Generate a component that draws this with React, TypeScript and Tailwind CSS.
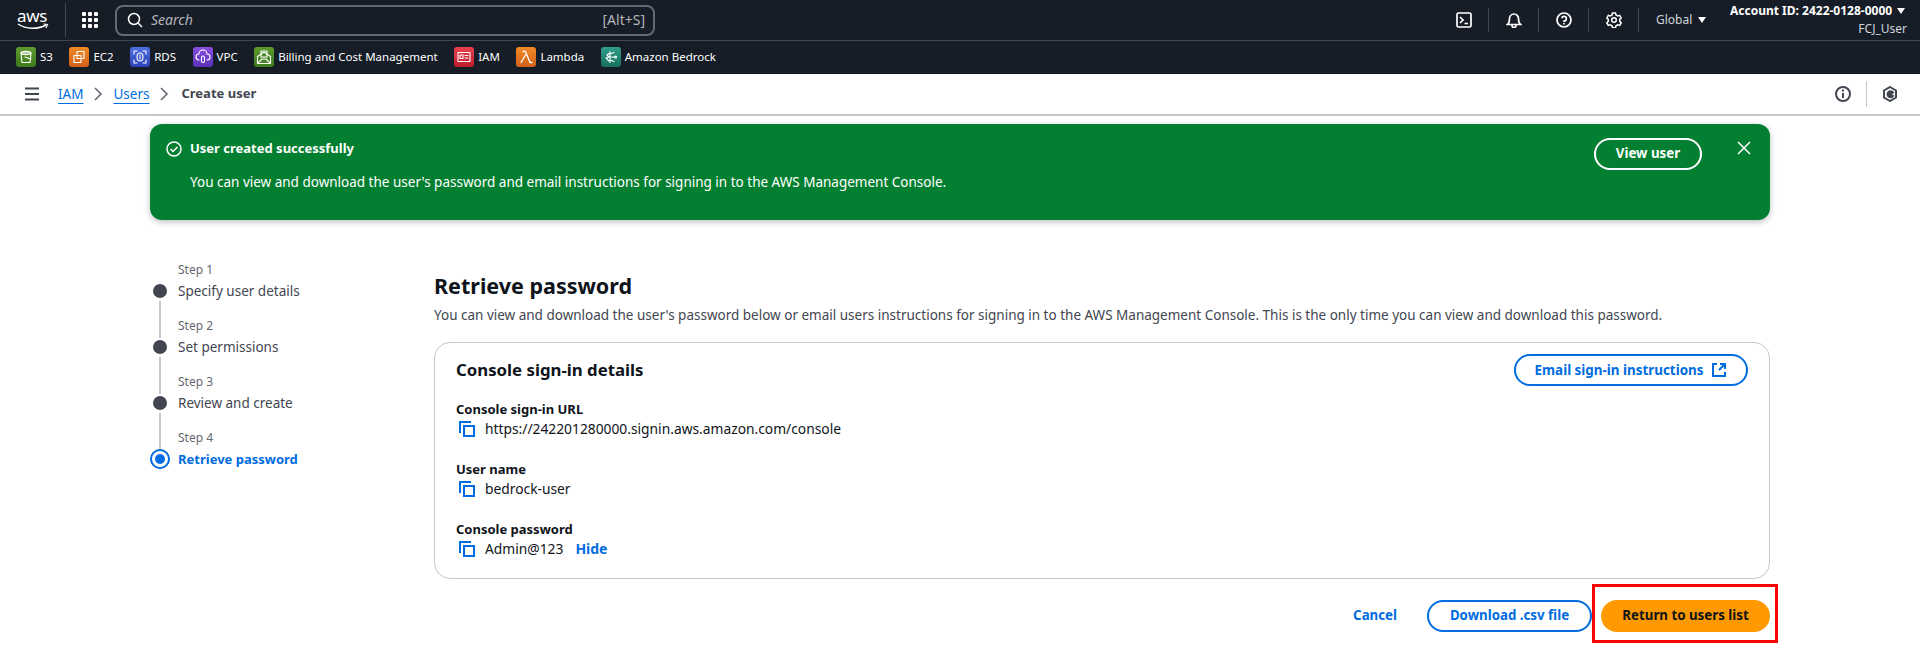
import React from "react";

const font = { fontFamily: '"Noto Sans", sans-serif' };

function ServiceIcon({ from, to, children }: { from: string; to: string; children: React.ReactNode }) {
  return (
    <span className={`w-5 h-5 rounded-[3px] flex items-center justify-center bg-gradient-to-b ${from} ${to}`}>
      <svg viewBox="0 0 20 20" className="w-5 h-5" fill="none" stroke="white" strokeWidth="1.1" strokeLinejoin="round" strokeLinecap="round">
        {children}
      </svg>
    </span>
  );
}

const services = [
  { name: "S3", from: "from-[#5d9a2e]", to: "to-[#3c7a1c]", w: "ml-4", icon: <><path d="M5 6h10l-1 9.5h-8z" /><ellipse cx="10" cy="6" rx="5" ry="1.6" /><path d="M9 10l6 2" /></> },
  { name: "EC2", from: "from-[#f08a24]", to: "to-[#d2601a]", w: "", icon: <><rect x="8" y="4.5" width="7" height="7" /><rect x="5" y="8.5" width="7" height="7" /></> },
  { name: "RDS", from: "from-[#4f6fe0]", to: "to-[#2e3fb8]", w: "", icon: <><ellipse cx="10" cy="10" rx="3" ry="4" /><path d="M4 7V4h3M16 7V4h-3M4 13v3h3M16 13v3h-3M10 8v4" /></> },
  { name: "VPC", from: "from-[#8a4fe0]", to: "to-[#5a30b8]", w: "", icon: <><path d="M6 13a3 3 0 0 1 0-6 4 4 0 0 1 8 0 3 3 0 0 1 0 6" /><rect x="8.5" y="9" width="3" height="6.5" rx="1.5" /></> },
  { name: "Billing and Cost Management", from: "from-[#5d9a2e]", to: "to-[#3c7a1c]", w: "", icon: <><path d="M3.5 9.5v7h13v-7L10 5z" /><path d="M3.5 16.5L8 12h4l4.500 4.500" /><path d="M7 4h6v6H7z" /></> },
  { name: "IAM", from: "from-[#e8404f]", to: "to-[#bd1c2c]", w: "", icon: <><rect x="4" y="5.500" width="12" height="9" /><rect x="6" y="8" width="3" height="3.500" /><path d="M11 8.500h3M11 11h3" /></> },
  { name: "Lambda", from: "from-[#f08a24]", to: "to-[#d2601a]", w: "", icon: <path d="M7 4.500h2.500L14 15.500h2M9.500 8L5 15.500" strokeWidth="1.300" /> },
  { name: "Amazon Bedrock", from: "from-[#2f9e8a]", to: "to-[#176f5f]", w: "", icon: <><path d="M9 4.500v11M9 6L6 8l2 2-3 1 3 3M9 7l4-1.500M9 10h5M9 13l4 1.500" /><circle cx="14.500" cy="10" r="1" /></> },
];

function Divider({ h = "h-6" }: { h?: string }) {
  return <span className={`block w-px ${h} bg-[#424650]`} />;
}

function Copy() {
  return (
    <svg viewBox="0 0 16 16" className="w-4 h-4 text-[#006ce0] shrink-0" fill="none" stroke="currentColor" strokeWidth="2">
      <path d="M1 12V1h11" />
      <rect x="5" y="5" width="10" height="10" />
    </svg>
  );
}

function Field({ label, children, mb = "mb-[20px]" }: { label: string; children: React.ReactNode; mb?: string }) {
  return (
    <div className={mb}>
      <div className="text-[13px] leading-[20px] font-bold text-[#0f141a] h-[20px]">{label}</div>
      <div className="flex items-center h-[20px] text-[13.8px] text-[#0f141a] pl-[3px]">
        <Copy />
        <span className="ml-[10px] flex items-center">{children}</span>
      </div>
    </div>
  );
}

function Step({ n, label, active, line }: { n: number; label: string; active?: boolean; line?: boolean }) {
  return (
    <div className="relative pl-[48px] h-[56px]">
      <div className="text-xs leading-[16px] text-[#656871] h-[19px]">Step {n}</div>
      <div className={`leading-[20px] ${active ? "text-[13px] font-bold text-[#006ce0]" : "text-[13.5px] text-[#424650]"}`}>{label}</div>
      {active ? (
        <span className="absolute left-[20px] top-[19px] w-5 h-5 rounded-full border-2 border-[#006ce0] flex items-center justify-center">
          <span className="w-[10px] h-[10px] rounded-full bg-[#006ce0]" />
        </span>
      ) : (
        <span className="absolute left-[23px] top-[22px] w-[14px] h-[14px] rounded-full bg-[#424650]" />
      )}
      {line && <span className="absolute left-[29px] top-[39px] w-[2px] h-[37px] bg-[#c6c6cd]" />}
    </div>
  );
}

export default function App() {
  return (
    <div className="relative w-[1920px] h-[651px] overflow-hidden bg-white" style={font}>
      {/* Top bar */}
      <header className="h-[41px] bg-[#161d26] border-b border-[#424650] flex items-center text-white">
        <div className="w-[65px] pl-[17px] flex flex-col items-start">
          <span className="block text-[17px] leading-[14px] h-[14px] text-white tracking-[-0.3px]">aws</span>
          <svg viewBox="0 0 32 8" className="w-[32px] h-[8px]" fill="none">
            <path d="M1 1c8 5.500 20 5.500 28 1" stroke="white" strokeWidth="1.500" />
            <path d="M26.500 1l4 .5-1.500 3.500" stroke="white" strokeWidth="1.200" />
          </svg>
        </div>
        <Divider h="h-[34px]" />
        <div className="w-[16px] h-[16px] ml-[16px] grid grid-cols-3 gap-[2px]">
          {Array.from({ length: 9 }).map((_, i) => (
            <span key={i} className="bg-white rounded-[1px] w-[4px] h-[4px]" />
          ))}
        </div>
        <div className="ml-[17px] w-[540px] h-[31px] rounded-lg border-2 border-[#656871] flex items-center pl-[10px] pr-[8px] text-sm text-[#b4b4bb]">
          <svg viewBox="0 0 16 16" className="w-4 h-4 text-white" fill="none" stroke="currentColor" strokeWidth="1.500">
            <circle cx="7" cy="7" r="5.500" />
            <path d="M11 11l4 4" />
          </svg>
          <span className="ml-[8px] italic flex-1">Search</span>
          <span>[Alt+S]</span>
        </div>
        <div className="flex-1" />
        <div className="flex items-center h-[40px]">
          <svg viewBox="0 0 16 16" className="w-4 h-4" fill="none" stroke="white" strokeWidth="1.700">
            <rect x="1" y="1" width="14" height="14" rx="1.500" />
            <path d="M4 5l3 3-3 3M8.500 11.500H12" />
          </svg>
          <span className="ml-[16px] mr-[17px]"><Divider /></span>
          <svg viewBox="0 0 16 16" className="w-4 h-4" fill="none" stroke="white" strokeWidth="1.700">
            <path d="M1.500 12.500c2-1.500 2-3 2-6a4.500 4.500 0 0 1 9 0c0 3 0 4.500 2 6z" />
            <path d="M6 13v.5a2 2 0 0 0 4 0V13" />
          </svg>
          <span className="ml-[16px] mr-[17px]"><Divider /></span>
          <svg viewBox="0 0 16 16" className="w-4 h-4" fill="none" stroke="white" strokeWidth="1.700">
            <circle cx="8" cy="8" r="7" />
            <path d="M5.800 6.200A2.300 2.300 0 1 1 8 9v1" />
            <path d="M8 11v1.500" />
          </svg>
          <span className="ml-[16px] mr-[17px]"><Divider /></span>
          <svg viewBox="0 0 16 16" className="w-4 h-4" fill="none" stroke="white" strokeWidth="1.500">
            <path d="M6.500 1h3l.5 2 1.700 1 2-.6 1.500 2.600-1.500 1.400v2l1.500 1.400-1.500 2.600-2-.6-1.700 1-.5 2h-3l-.5-2-1.700-1-2 .6-1.500-2.600 1.500-1.400v-2L.8 6l1.500-2.600 2 .6L6 3z" />
            <circle cx="8" cy="8" r="2.300" />
          </svg>
          <span className="ml-[16px] mr-[17px]"><Divider /></span>
          <span className="text-xs text-[#d1d5db] w-[37px]">Global</span>
          <span className="ml-[5px] w-0 h-0 border-l-[4px] border-r-[4px] border-t-[6px] border-l-transparent border-r-transparent border-t-white" />
        </div>
        <div className="ml-[24px] mr-[13px] w-[177px] flex flex-col items-end text-xs leading-[18px] pb-[1px]">
          <div className="font-bold flex items-center self-start whitespace-nowrap text-[12px]">
            Account ID: 2422-0128-0000
            <span className="ml-[5px] w-0 h-0 border-l-[4px] border-r-[4px] border-t-[6px] border-l-transparent border-r-transparent border-t-white" />
          </div>
          <div className="text-[#d1d5db]">FCJ_User</div>
        </div>
      </header>

      {/* Service bar */}
      <nav className="h-[33px] bg-[#161d26] flex items-center gap-[16.5px] text-[11.5px] text-white border-b border-[#0f141a]">
        {services.map((s) => (
          <span key={s.name} className={`flex items-center gap-[4px] ${s.w}`}>
            <ServiceIcon from={s.from} to={s.to}>{s.icon}</ServiceIcon>
            {s.name}
          </span>
        ))}
      </nav>

      {/* Breadcrumb */}
      <div className="h-[42px] border-b-2 border-[#c6c6cd] flex items-center text-[13.5px] pl-[24px] pr-[22px]">
        <svg viewBox="0 0 16 16" className="w-4 h-4 text-[#424650]" fill="none" stroke="currentColor" strokeWidth="2">
          <path d="M1 2.500h14M1 8h14M1 13.500h14" />
        </svg>
        <a className="ml-[18px] text-[#006ce0] underline underline-offset-4">IAM</a>
        <svg viewBox="0 0 16 16" className="w-4 h-4 mx-[7px] text-[#656871]" fill="none" stroke="currentColor" strokeWidth="1.600">
          <path d="M5 2l6 6-6 6" />
        </svg>
        <a className="text-[#006ce0] underline underline-offset-4">Users</a>
        <svg viewBox="0 0 16 16" className="w-4 h-4 mx-[7px] text-[#656871]" fill="none" stroke="currentColor" strokeWidth="1.600">
          <path d="M5 2l6 6-6 6" />
        </svg>
        <span className="font-bold text-[13px] text-[#424650] ml-[2px]">Create user</span>
        <div className="flex-1" />
        <svg viewBox="0 0 16 16" className="w-4 h-4 text-[#424650]" fill="none" stroke="currentColor" strokeWidth="2">
          <circle cx="8" cy="8" r="7" />
          <path d="M8 7v5M8 3.500v2" />
        </svg>
        <span className="mx-[15px] w-px h-[26px] bg-[#c6c6cd]" />
        <svg viewBox="0 0 16 16" className="w-4 h-4 text-[#424650]" fill="none" stroke="currentColor" strokeWidth="2">
          <path d="M8 1l6 3.500v7L8 15l-6-3.500v-7z" />
          <path d="M11 6.500A3 3 0 1 0 11 10L8 8z" fill="currentColor" />
        </svg>
      </div>

      {/* Flash */}
      <div className="mt-[8px] ml-[150px] w-[1620px] h-[96px] rounded-xl bg-[#037f31] shadow-[0_2px_6px_rgba(0,0,0,0.25)] text-white text-[13.5px] flex items-start pl-4 pr-[18px]">
        <div className="flex-1 pt-[14px]">
          <div className="flex items-center h-[20px] pt-[1px]">
            <svg viewBox="0 0 16 16" className="w-4 h-4" fill="none" stroke="white" strokeWidth="1.500">
              <circle cx="8" cy="8" r="7" />
              <path d="M4.500 8l2.500 2.500L11.500 6" />
            </svg>
            <span className="ml-2 font-bold text-[13px]">User created successfully</span>
          </div>
          <div className="ml-6 mt-[14px] leading-[20px]">
            You can view and download the user's password and email instructions for signing in to the AWS Management Console.
          </div>
        </div>
        <button className="mt-[14px] w-[108px] h-[32px] rounded-full border-2 border-white font-bold text-[13.3px] flex items-center justify-center">
          View user
        </button>
        <svg viewBox="0 0 16 16" className="ml-[34px] mt-[16px] w-4 h-4" fill="none" stroke="white" strokeWidth="1.500">
          <path d="M2 2l12 12M14 2L2 14" />
        </svg>
      </div>

      {/* Content */}
      <div className="flex mt-[41px]">
        <div className="ml-[130px] w-[304px] pt-[1px]">
          <Step n={1} label="Specify user details" line />
          <Step n={2} label="Set permissions" line />
          <Step n={3} label="Review and create" line />
          <Step n={4} label="Retrieve password" active />
        </div>
        <div className="w-[1336px]">
          <h1 className="text-[21.5px] leading-[30px] font-bold text-[#0f141a] mt-[10px]">Retrieve password</h1>
          <p className="text-[13.5px] leading-[20px] text-[#424650] mt-[4px]">
            You can view and download the user's password below or email users instructions for signing in to the AWS Management Console. This is the only time you can view and download this password.
          </p>
          <div className="mt-[17px] h-[237px] rounded-2xl border border-[#c6c6cd] pl-[21px] pr-[21px] pt-[11px]">
            <div className="flex items-center justify-between h-[32px]">
              <h2 className="text-[16.8px] font-bold text-[#0f141a]">Console sign-in details</h2>
              <button className="w-[234px] h-[32px] rounded-full border-2 border-[#006ce0] text-[#006ce0] text-[13.4px] font-bold flex items-center justify-center gap-2">
                Email sign-in instructions
                <svg viewBox="0 0 16 16" className="w-4 h-4" fill="none" stroke="currentColor" strokeWidth="2">
                  <path d="M6 2H2v12h12v-4" />
                  <path d="M9 2h5v5M14 2L8 8" />
                </svg>
              </button>
            </div>
            <div className="mt-[13px]">
              <Field label="Console sign-in URL">https://242201280000.signin.aws.amazon.com/console</Field>
              <Field label="User name">bedrock-user</Field>
              <Field label="Console password" mb="">
                Admin@123
                <a className="ml-3 font-bold text-sm text-[#006ce0]">Hide</a>
              </Field>
            </div>
          </div>
          <div className="flex items-center justify-end mt-[21px] text-[13.3px] font-bold">
            <a className="text-[#006ce0] mr-[30px]">Cancel</a>
            <button className="w-[165px] h-[32px] rounded-full border-2 border-[#006ce0] text-[#006ce0] font-bold">
              Download .csv file
            </button>
            <button className="ml-[9px] w-[169px] h-[32px] rounded-full bg-[#ff9900] text-[#0f141a] font-bold">
              Return to users list
            </button>
          </div>
        </div>
      </div>

      {/* Annotation */}
      <div className="absolute left-[1592px] top-[584px] w-[186px] h-[59px] border-[3px] border-[#ff0000] pointer-events-none" />
    </div>
  );
}
